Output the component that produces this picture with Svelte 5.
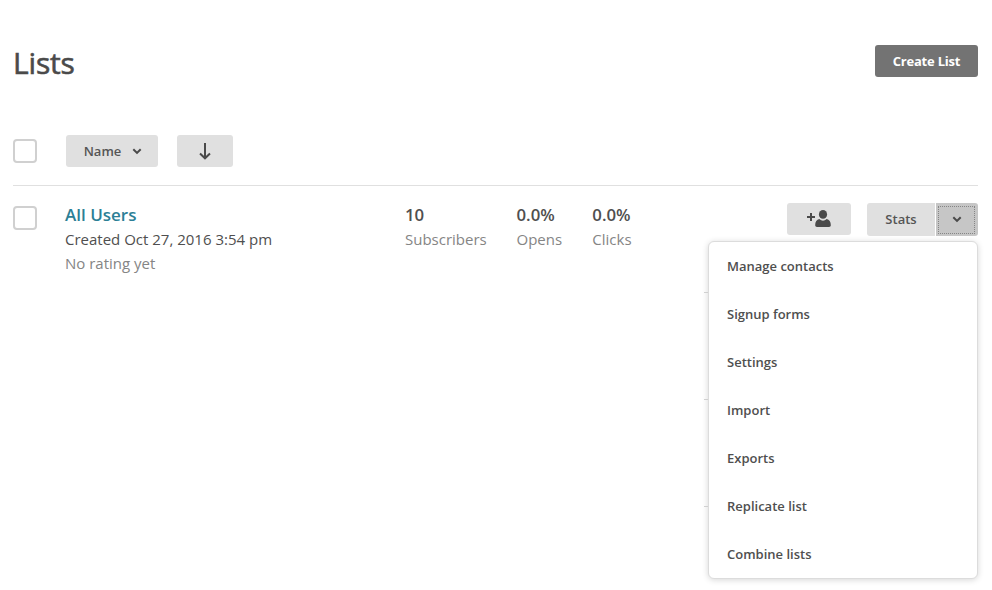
<script>
  const stats = [
    { value: '10', label: 'Subscribers', width: 111.5 },
    { value: '0.0%', label: 'Opens', width: 75.8 },
    { value: '0.0%', label: 'Clicks', width: 60 }
  ];
  const actions = ['Manage contacts', 'Signup forms', 'Settings', 'Import', 'Exports', 'Replicate list', 'Combine lists'];
  const dividers = [50, 157, 264];
</script>

<main>
  <header>
    <h1>Lists</h1>
    <button class="create">Create List</button>
  </header>

  <div class="toolbar">
    <span class="check"></span>
    <button class="name">Name
      <svg width="10" height="7" viewBox="0 0 10 7"><path d="M1.3 1.2 L5 4.9 L8.7 1.2" /></svg>
    </button>
    <button class="sort" aria-label="Sort descending">
      <svg width="12" height="17" viewBox="0 0 12 17"><path d="M6 0V15M1 10.5 6 15.3 11 10.5" /></svg>
    </button>
  </div>

  <section class="row">
    <span class="check"></span>
    <div class="info">
      <a href="#list">All Users</a>
      <span class="created">Created Oct 27, 2016 3:54 pm</span>
      <span class="muted rating">No rating yet</span>
    </div>
    <div class="stats">
      {#each stats as s}
        <div style:width="{s.width}px"><strong>{s.value}</strong><span class="muted">{s.label}</span></div>
      {/each}
    </div>
    <div class="controls">
      <button class="add" aria-label="Add contact">
        <svg width="24" height="18" viewBox="0 0 24 18">
          <path class="plus" d="M0 7h8M4 3v8" />
          <ellipse cx="16" cy="4.4" rx="4.1" ry="4.3" />
          <path class="body" d="M12.3 9.1Q16 12.3 19.7 9.1C22.3 9.5 23.8 11.8 23.8 15V15.6Q23.8 17 22 17H10Q8.2 17 8.2 15.6V15C8.2 11.8 9.7 9.5 12.3 9.1Z" />
        </svg>
      </button>
      <div class="split">
        <button class="statbtn">Stats</button>
        <button class="toggle" aria-label="More actions">
          <svg width="10" height="7" viewBox="0 0 10 7"><path d="M1.3 1.2 L5 4.9 L8.7 1.2" /></svg>
        </button>
        <div class="menu">
          {#each dividers as y}<i style:top="{y}px"></i>{/each}
          {#each actions as action}<div class="item">{action}</div>{/each}
        </div>
      </div>
    </div>
  </section>
</main>

<style>
  :global(body) { margin: 0; background: #fff; }
  main {
    box-sizing: border-box; width: 992px; height: 590px; overflow: hidden;
    padding: 45px 14px 0 13px; color: #4f4f4f;
    font-family: "Open Sans", sans-serif; font-size: 15px;
  }
  header { display: flex; justify-content: space-between; align-items: flex-start; height: 90px; }
  h1 {
    margin: 0; color: #4a4a4a; font-size: 30px; line-height: 36px; font-weight: 400;
    letter-spacing: -0.15px; -webkit-text-stroke: .6px #4a4a4a;
  }
  button {
    box-sizing: border-box; display: flex; align-items: center; justify-content: center;
    height: 32px; margin: 0; padding: 0; border: 0; border-radius: 3px;
    background: #e0e0e0; color: #555; font: 600 13px "Open Sans", sans-serif;
  }
  .create { width: 103px; background: #737373; color: #fff; font-weight: 700; letter-spacing: -0.2px; }
  .toolbar { display: flex; height: 50px; border-bottom: 1px solid #e0e0e0; }
  .check { box-sizing: border-box; flex: none; width: 24px; height: 24px; border: 2px solid #d0d0d0; border-radius: 4px; }
  .toolbar .check { margin-top: 4px; }
  .name { width: 92px; margin-left: 29px; gap: 11px; padding-left: 2px; }
  .sort { width: 56px; margin-left: 19px; }
  svg { display: block; fill: none; stroke: #4a4a4a; stroke-width: 2; }
  .row { display: flex; padding-top: 17px; }
  .row .check { margin-top: 3px; }
  .info { display: flex; flex-direction: column; width: 340px; margin-left: 28px; }
  .info a { color: #2c7f96; font-size: 17px; line-height: 24px; font-weight: 600; text-decoration: none; }
  .info span { line-height: 24px; }
  .muted { color: #858585; }
  .stats { display: flex; }
  .stats div { display: flex; flex-direction: column; }
  .stats strong { font-size: 16.8px; line-height: 24px; font-weight: 600; }
  .stats span { line-height: 24px; }
  .controls { display: flex; margin-left: auto; }
  .add { width: 64px; margin-right: 16px; padding-right: 1px; }
  .add svg { fill: #4a4a4a; }
  .add ellipse, .add .body { stroke: none; }
  .split { position: relative; display: flex; gap: 1px; height: 33px; }
  .split button { height: 33px; }
  .split .statbtn { width: 68px; padding-bottom: 1px; border-radius: 3px 0 0 3px; }
  .toggle { position: relative; width: 42px; border-radius: 0 3px 3px 0; background: #c6c6c6; }
  .toggle::after { content: ""; position: absolute; inset: 3px 3px 2px 2px; border: 1px dotted #858585; }
  .menu {
    position: absolute; z-index: 1; top: 38px; right: 0; box-sizing: border-box;
    width: 270px; height: 338px; border: 1px solid #dcdcdc; border-radius: 6px;
    background: #fff; box-shadow: 0 1px 6px rgba(0, 0, 0, .16);
  }
  .menu i { position: absolute; left: -5px; width: 4px; height: 1px; background: #d0d0d0; }
  .item { height: 48px; padding-left: 18px; line-height: 48px; font-size: 13px; font-weight: 600; }
</style>
